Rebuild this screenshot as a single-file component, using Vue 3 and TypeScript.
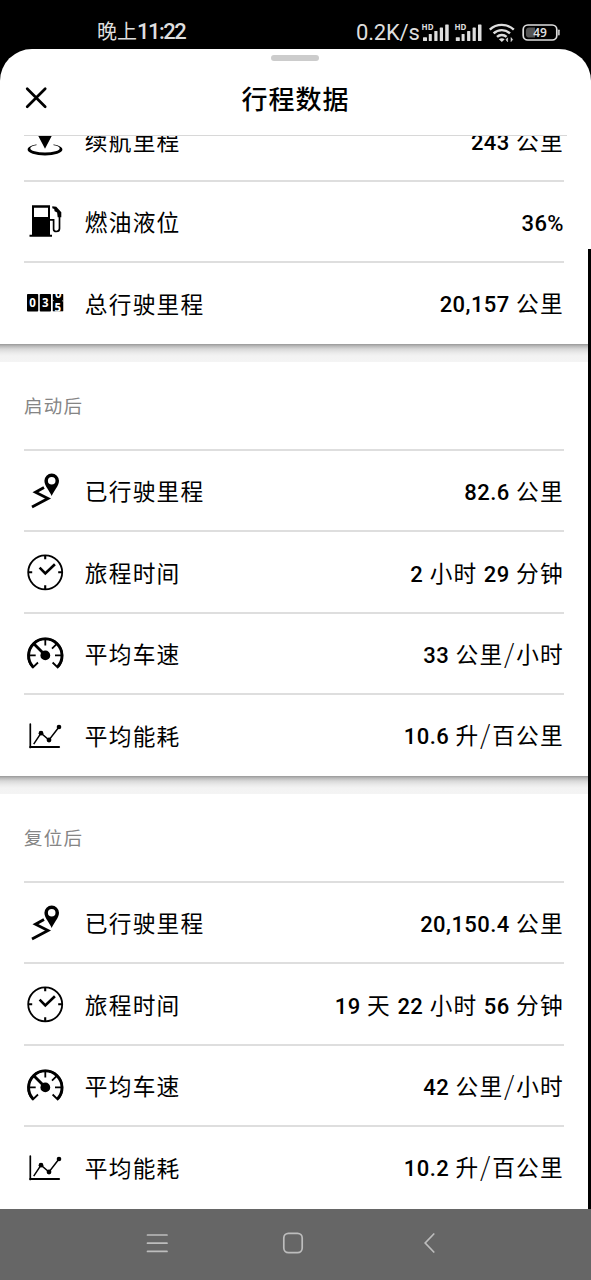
<script setup lang="ts">
type IconName = 'range' | 'fuel' | 'odometer' | 'route' | 'clock' | 'speed' | 'chart'

interface Row {
  icon: IconName
  label: string
  value: string
}

interface Section {
  title?: string
  rows: Row[]
}

interface Part {
  text: string
  kind: 'num' | 'slash' | 'unit'
}

const sections: Section[] = [
  {
    rows: [
      { icon: 'range', label: '续航里程', value: '243 公里' },
      { icon: 'fuel', label: '燃油液位', value: '36%' },
      { icon: 'odometer', label: '总行驶里程', value: '20,157 公里' },
    ],
  },
  {
    title: '启动后',
    rows: [
      { icon: 'route', label: '已行驶里程', value: '82.6 公里' },
      { icon: 'clock', label: '旅程时间', value: '2 小时 29 分钟' },
      { icon: 'speed', label: '平均车速', value: '33 公里/小时' },
      { icon: 'chart', label: '平均能耗', value: '10.6 升/百公里' },
    ],
  },
  {
    title: '复位后',
    rows: [
      { icon: 'route', label: '已行驶里程', value: '20,150.4 公里' },
      { icon: 'clock', label: '旅程时间', value: '19 天 22 小时 56 分钟' },
      { icon: 'speed', label: '平均车速', value: '42 公里/小时' },
      { icon: 'chart', label: '平均能耗', value: '10.2 升/百公里' },
    ],
  },
]

// Splits a value so that digits, slashes and units can be set differently.
function parts(value: string): Part[] {
  return value
    .split(/([\d.,%]+|\/)/)
    .filter((p) => p !== '')
    .map((p) => ({ text: p, kind: p === '/' ? 'slash' : /^[\d.,%]+$/.test(p) ? 'num' : 'unit' }))
}

const signalBars = [
  { x: 3, y: 37.2, w: 4 },
  { x: 8.8, y: 34, w: 3 },
  { x: 14.3, y: 31, w: 3.2 },
  { x: 19.8, y: 27.6, w: 3.2 },
  { x: 25.2, y: 24.4, w: 3.5 },
]
</script>

<template>
  <div class="phone">
    <div class="status">
      <span class="time">晚上<span class="clock">11:22</span></span>
      <span class="rate">0.2K/s</span>
      <svg class="indicators" width="142" height="49" viewBox="0 0 142 49">
        <g v-for="dx in [0, 32.8]" :key="dx" :transform="`translate(${dx} 0)`" fill="#dedede">
          <rect v-for="b in signalBars" :key="b.x" :x="b.x" :y="b.y" :width="b.w" :height="41 - b.y" rx="0.6" />
          <text x="1.6" y="30.2" class="hd">HD</text>
        </g>
        <g fill="none" stroke="#dedede" stroke-width="2.4">
          <path d="M69.8 29.6a17.5 17.5 0 0 1 24 0" />
          <path d="M73.6 33.4a12 12 0 0 1 16.4 0" />
          <path d="M77 36.9a7 7 0 0 1 9.6 0" />
        </g>
        <path d="M78.9 39.3q2.9-2 5.8 0l-2.9 2.7z" fill="#dedede" />
        <path d="M87.6 41.8v-4l-1.6 2zM91 37.6v4l1.6-2z" fill="#dedede" stroke="#dedede" stroke-width="0.6" />
        <rect x="103.2" y="25" width="33.6" height="15" rx="4.6" fill="none" stroke="#dedede" stroke-width="1.7" />
        <path d="M109.5 27.4h5.5v10.2h-5.5q-3.6 0-3.6-3.4v-3.4q0-3.4 3.6-3.4z" fill="#555" />
        <path d="M138.9 30.2v4.6" stroke="#dedede" stroke-width="1.5" stroke-linecap="round" />
        <text x="120" y="37" text-anchor="middle" class="pct">49</text>
      </svg>
    </div>

    <div class="sheet">
      <div class="header">
        <div class="handle"></div>
        <div class="bar">
          <svg class="close" width="24" height="24" viewBox="0 0 24 24">
            <path d="M3.2 2.8l18 18M21.2 2.8l-18 18" stroke="#000" stroke-width="2.7" stroke-linecap="round" />
          </svg>
          <h1>行程数据</h1>
        </div>
        <div class="rule"></div>
      </div>

      <div class="scroll">
        <div class="cards">
          <section v-for="(s, i) in sections" :key="i" class="card">
            <h2 v-if="s.title">{{ s.title }}</h2>
            <div v-for="r in s.rows" :key="r.icon" class="row">
              <svg class="icon" width="42" height="42" viewBox="0 0 42 42">
                <template v-if="r.icon === 'range'">
                  <path fill-rule="evenodd" d="M3.6 30.400a17.400 6 0 1 0 34.800 0a17.400 6 0 1 0-34.800 0zM6.300 29.400a14.700 4 0 1 1 29.400 0a14.700 4 0 1 1-29.400 0z" />
                  <path d="M12.500 22h17v5.200h-17z" fill="#fff" />
                  <path d="M21 29.800L14.300 17a7.600 7.600 0 1 1 13.400 0z" />
                </template>
                <template v-else-if="r.icon === 'fuel'">
                  <path fill-rule="evenodd" d="M8 5.200h18v29.600h2v2H5.500v-2H8zM10 7.700v9.300h14V7.700z" />
                  <path d="M26 19.800h3.600v9.400q0 2.300 2.700 2.300q3.200 0 3.200-3V13" fill="none" stroke="#000" stroke-width="1.700" />
                  <path d="M28.300 6.200l4 .6 5 5.400v5h-3.600l-.6-4.600-2.500-1.300-.4-2.200-1.900-.8z" />
                </template>
                <template v-else-if="r.icon === 'odometer'">
                  <rect x="3" y="12" width="11.200" height="17.600" rx="0.8" />
                  <rect x="15.800" y="12" width="11.200" height="17.600" rx="0.8" />
                  <clipPath id="drum"><rect x="28.500" y="12" width="11" height="17.600" rx="0.8" /></clipPath>
                  <g clip-path="url(#drum)">
                    <rect x="28.500" y="12" width="11" height="17.600" />
                    <text x="34.400" y="16" class="drum">0</text>
                    <text x="33.800" y="30" class="drum">5</text>
                    <path d="M28 18l1.800.7M38 18.700l1.800.7" stroke="#fff" stroke-width="0.700" />
                  </g>
                  <text x="8.600" y="25" class="drum">0</text>
                  <text x="21.400" y="25" class="drum">3</text>
                </template>
                <template v-else-if="r.icon === 'route'">
                  <path fill-rule="evenodd" d="M27.700 27C26 22.500 20.400 17 20.400 11.800a7.300 7.300 0 0 1 14.600 0C35 17 29.400 22.500 27.700 27zM27.700 8a3.800 3.800 0 1 0 0 7.600a3.800 3.800 0 0 0 0-7.600z" />
                  <path d="M20 18.600L11.500 23.200L24 29.600L8 38" fill="none" stroke="#000" stroke-width="2.800" />
                </template>
                <template v-else-if="r.icon === 'clock'">
                  <circle cx="21.200" cy="21.300" r="17" fill="none" stroke="#000" stroke-width="1.800" />
                  <path d="M21.200 4.300v4M21.200 34.300v4M4.200 21.300h4M34.200 21.300h4" stroke="#000" stroke-width="2.100" />
                  <path d="M15.600 16.700L21.300 22.500L30.900 13.300" fill="none" stroke="#000" stroke-width="2.600" />
                </template>
                <template v-else-if="r.icon === 'speed'">
                  <path d="M14 30.500L8.900 35.400A17 17 0 1 1 33.700 35.400L28.600 30.500" fill="none" stroke="#000" stroke-width="1.800" />
                  <path d="M8.900 34.800A16.700 16.700 0 1 1 33.700 34.800" fill="none" stroke="#000" stroke-width="2.900" />
                  <path d="M21.300 6v7.500M4 23.300h7.700M31 23.300h7.700M33.300 11.300L28 16.600" stroke="#000" stroke-width="1.800" />
                  <path d="M9.800 11.800L21.300 23.300" stroke="#000" stroke-width="2.800" />
                  <circle cx="21.300" cy="23.400" r="4.900" />
                </template>
                <template v-else>
                  <path d="M6.300 10V33.500" stroke="#000" stroke-width="1.700" stroke-linecap="round" />
                  <path d="M6.300 33H35" stroke="#000" stroke-width="2.200" stroke-linecap="round" />
                  <path d="M9.700 30.200L17 19.200L25 26L35 13" fill="none" stroke="#000" stroke-width="1.500" />
                  <circle cx="17" cy="19.200" r="2.400" />
                  <circle cx="25" cy="26" r="2.400" />
                  <circle cx="35" cy="13" r="2.300" />
                </template>
              </svg>
              <span class="label">{{ r.label }}</span>
              <span class="value"><span v-for="(p, k) in parts(r.value)" :key="k" :class="p.kind">{{ p.text }}</span></span>
            </div>
          </section>
        </div>
        <div class="edge"></div>
      </div>
    </div>

    <div class="nav">
      <svg width="24" height="24" viewBox="0 0 24 24"><path d="M2.500 4h19.500M2.500 12.200h19.500M2.500 20.400h19.500" /></svg>
      <svg width="24" height="24" viewBox="0 0 24 24"><rect x="2.800" y="2.300" width="18.400" height="19.400" rx="4.600" /></svg>
      <svg width="24" height="24" viewBox="0 0 24 24"><path d="M16.800 3L8.200 12l8.600 9" /></svg>
    </div>
  </div>
</template>

<style>
body {
  margin: 0;
  background: #000;
}
</style>

<style scoped>
.phone {
  width: 591px;
  height: 1280px;
  display: flex;
  flex-direction: column;
  overflow: hidden;
  background: #000;
  color: #000;
  font-family: "Noto Sans CJK SC", "Noto Sans", sans-serif;
}
.status {
  height: 49px;
  flex: none;
  display: flex;
  align-items: center;
  color: #dedede;
  white-space: nowrap;
}
.time,
.rate {
  line-height: 30px;
  padding-top: 16px;
}
.time {
  box-sizing: border-box;
  width: 259px;
  margin-left: 97px;
  padding-top: 14px;
  font-size: 20px;
  font-weight: 400;
}
.clock {
  font-family: Roboto, sans-serif;
  font-size: 22px;
  font-weight: 500;
  letter-spacing: -1.5px;
}
.rate {
  width: 64px;
  font-family: Roboto, sans-serif;
  font-size: 22px;
  letter-spacing: -0.2px;
}
.indicators {
  display: block;
}
.hd {
  font: 700 8px "Noto Sans", sans-serif;
}
.pct {
  font: 600 12px "Noto Sans", sans-serif;
  fill: #dedede;
}
.sheet {
  flex: none;
  height: 1160px;
  display: flex;
  flex-direction: column;
  background: #fff;
  border-radius: 32px 32px 0 0;
  overflow: hidden;
}
.header {
  flex: none;
  height: 87px;
  display: flex;
  flex-direction: column;
}
.handle {
  width: 48px;
  height: 6px;
  margin: 6px 0 0 271px;
  border-radius: 3px;
  background: #ccc;
}
.bar {
  flex: 1;
  display: grid;
  grid-template-columns: 24px 1fr 24px;
  align-items: center;
  padding: 0 24px;
}
.close {
  display: block;
}
h1 {
  margin: 0;
  text-align: center;
  font-size: 26px;
  line-height: 40px;
  font-weight: 500;
  letter-spacing: 1px;
}
.rule {
  height: 1px;
  margin: 0 24px;
  background: #d8d8d8;
}
.scroll {
  flex: 1;
  min-height: 0;
  overflow: hidden;
  display: flex;
  align-items: flex-start;
}
.cards {
  flex: 1;
  margin-top: -38px;
}
.card {
  padding: 0 24px;
  background: #fff;
}
.card + .card::before {
  content: "";
  display: block;
  height: 18px;
  margin: 0 -24px;
  background: linear-gradient(#989898 0, #b8b8b8 2px, #d8d8d8 5px, #ebebeb 9px, #f3f3f3 12px, #f4f4f4 100%);
}
h2 {
  margin: 0;
  height: 87px;
  line-height: 86px;
  font-size: 18.500px;
  font-weight: 400;
  letter-spacing: 1.200px;
  color: #858585;
}
.row {
  height: 79.500px;
  display: flex;
  align-items: center;
  border-top: 2px solid #dedede;
}
.row:last-child {
  height: 80.500px;
}
.icon {
  flex: none;
}
.label,
.value {
  padding-top: 2px;
  font-size: 22.700px;
  line-height: 36px;
  letter-spacing: 1.250px;
}
.row:last-child .label {
  padding-top: 1px;
}
.label {
  margin-left: 18.800px;
}
.value {
  margin-left: auto;
  padding-top: 4px;
  white-space: pre;
}
.row:last-child .value {
  padding-top: 2px;
}
.num {
  font-family: Roboto, sans-serif;
  font-size: 22px;
  font-weight: 500;
  letter-spacing: 0.450px;
}
.slash {
  padding: 0 0.700px 0 0.500px;
  font-size: 26px;
  line-height: 1;
  font-weight: 300;
}
.drum {
  font: 700 11.500px "Noto Sans", sans-serif;
  fill: #fff;
  text-anchor: middle;
}
.edge {
  flex: none;
  width: 3px;
  height: 960px;
  margin-top: 113px;
  background: #000;
}
.nav {
  flex: 1;
  display: flex;
  align-items: flex-start;
  gap: 112px;
  padding: 22px 0 0 145px;
  background: #666;
}
.nav svg {
  display: block;
  fill: none;
  stroke: #bdbdbd;
  stroke-width: 1.700;
  stroke-linecap: round;
}
</style>
